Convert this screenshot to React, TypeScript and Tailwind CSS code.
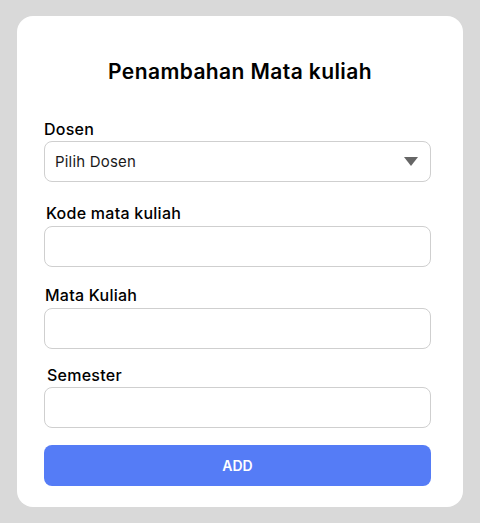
import React from 'react';

const Field: React.FC<{ label: string; className?: string; labelClass?: string }> = ({ label, className, labelClass }) => (
  <div className={className}>
    <label className={`block text-base leading-5 tracking-[0.25px] font-medium text-black ${labelClass ?? ''}`}>{label}</label>
    <input
      type="text"
      className="block w-full h-[41px] rounded-lg border border-[#cfcfcf] bg-white px-2.5 text-[15px] outline-none"
    />
  </div>
);

const App: React.FC = () => {
  return (
    <div className="min-h-[523px] bg-[#d9d9d9] px-[17px] pt-4 pb-4 font-['Inter',sans-serif]">
      <div className="bg-white rounded-2xl pl-[27px] pr-[32px] pt-[42px] pb-[21px]">
        <h1 className="pl-[5px] text-center text-[21px] leading-7 tracking-[0.4px] font-semibold text-black">Penambahan Mata kuliah</h1>

        {/* dosen */}
        <div className="mt-[33px]">
          <label className="block text-base leading-5 tracking-[0.25px] font-medium text-black mb-[2px]">Dosen</label>
          <div className="flex items-center justify-between h-[41px] rounded-lg border border-[#cfcfcf] pl-2.5 pr-3">
            <span className="pt-[2px] text-[15px] tracking-[0.2px] text-[#1a1a1a]">Pilih Dosen</span>
            <svg width="14" height="9" viewBox="0 0 14 9">
              <path d="M0 0h14L7 9z" fill="#666" />
            </svg>
          </div>
        </div>

        <Field label="Kode mata kuliah" className="mt-[21px]" labelClass="mb-[3px] pl-[2px]" />
        <Field label="Mata Kuliah" className="mt-[18px]" labelClass="mb-[3px] pl-[1px]" />
        <Field label="Semester" className="mt-4" labelClass="mb-[2px] pl-[3px]" />

        <button className="mt-[17px] w-full h-[41px] rounded-lg bg-[#557cf6] text-white text-sm font-semibold">
          ADD
        </button>
      </div>
    </div>
  );
};

export default App;
